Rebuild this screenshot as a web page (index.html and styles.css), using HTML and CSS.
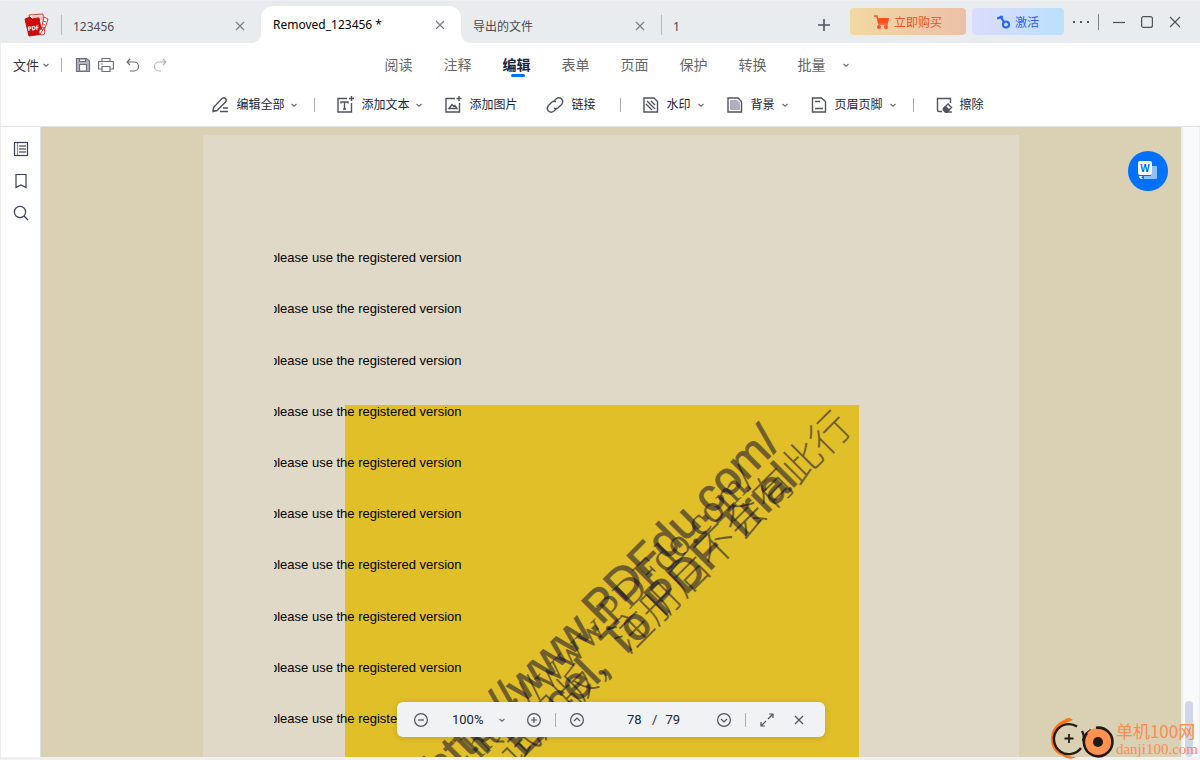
FILE: index.html
```
<!DOCTYPE html>
<html lang="zh-CN">
<head>
  <meta charset="UTF-8">
  <title>Removed_123456</title>
  <link rel="stylesheet" href="styles.css">
</head>
<body>

<header class="titlebar">
  <svg class="app-logo" width="26" height="26" viewBox="0 0 26 26">
    <path d="M5 3l14-1 1 20-12 1z" fill="#fff" stroke="#d33" />
    <path d="M8 5h10M9 7h9" stroke="#e88" />
    <path d="M20 5l4 2-5 15h-3z" fill="#fff" stroke="#d33" />
    <path d="M19 9l3 1M19 12l2 1M18 15l2 1" stroke="#d33" />
    <path d="M1 7l5-2 2 2 7-1 3 16-13 2z" fill="#cf0a0a" stroke="#cf0a0a" />
    <text class="logo-text" x="4" y="19" transform="rotate(-7 4 19)">PDF</text>
    <circle cx="18" cy="20" r="3" fill="#fff" stroke="#d33" />
    <path d="M16 22l5-7" stroke="#d33" />
  </svg>
  <div class="tabs">
    <div class="tab">
      <button class="tab-name">123456</button>
      <button class="tab-close" aria-label="关闭"><svg width="10" height="10" viewBox="0 0 10 10"><path d="M1 1l8 8M9 1L1 9" /></svg></button>
    </div>
    <div class="tab active">
      <button class="tab-name">Removed_123456 *</button>
      <button class="tab-close" aria-label="关闭"><svg width="10" height="10" viewBox="0 0 10 10"><path d="M1 1l8 8M9 1L1 9" /></svg></button>
    </div>
    <div class="tab">
      <button class="tab-name">导出的文件</button>
      <button class="tab-close" aria-label="关闭"><svg width="10" height="10" viewBox="0 0 10 10"><path d="M1 1l8 8M9 1L1 9" /></svg></button>
    </div>
    <div class="tab last">
      <button class="tab-name">1</button>
    </div>
  </div>
  <button class="icon-btn add-tab" aria-label="新建标签"><svg width="14" height="14" viewBox="0 0 14 14"><path d="M7 1v12M1 7h12" stroke-width="1.6" /></svg></button>
  <div class="window-actions">
    <button class="promo buy">
      <svg width="16" height="14" viewBox="0 0 16 14"><path d="M0 1h3l2 8h9" fill="none" stroke="#ff4d1f" stroke-width="1.6" /><path d="M4 3h11l-1 5H5z" fill="#ff4d1f" stroke="none" /><circle cx="5" cy="12" r="2" fill="#ff4d1f" stroke="none" /><circle cx="12" cy="12" r="2" fill="#ff4d1f" stroke="none" /></svg>
      立即购买
    </button>
    <button class="promo activate">
      <svg width="14" height="14" viewBox="0 0 14 14"><circle cx="9" cy="9.500" r="3" stroke="#2e62ff" stroke-width="2.2" /><path d="M7 7L3 1M0 3.500l6-2" stroke="#2e62ff" stroke-width="2.2" /></svg>
      激活
    </button>
    <button class="icon-btn more" aria-label="更多"><svg width="18" height="4" viewBox="0 0 18 4"><path d="M1 2h2M8 2h2M15 2h2" stroke-width="2" /></svg></button>
    <span class="divider"></span>
    <button class="icon-btn win" aria-label="最小化"><svg width="12" height="12" viewBox="0 0 12 12"><path d="M0 6.5h12" /></svg></button>
    <button class="icon-btn win" aria-label="最大化"><svg width="12" height="12" viewBox="0 0 12 12"><rect x=".6" y=".6" width="10.8" height="10.8" rx="2" /></svg></button>
    <button class="icon-btn win" aria-label="关闭窗口"><svg width="12" height="12" viewBox="0 0 12 12"><path d="M1 1l10 10M11 1L1 11" /></svg></button>
  </div>
</header>

<div class="menubar">
  <div class="quick">
    <button class="file-btn">文件 <svg class="chev" width="8" height="8" viewBox="0 0 8 8"><path d="M1.500 3L4 5.200 6.500 3" /></svg></button>
    <span class="divider"></span>
    <button class="icon-btn" aria-label="保存"><svg width="16" height="16" viewBox="0 0 16 16"><path d="M1.500 14.500V1.500h10L14.500 4v10.500z" fill="#b3b6c0" /><path d="M4.500 14V7.500h7V14zM4.500 2h6v2.500h-6z" fill="#fff" /></svg></button>
    <button class="icon-btn" aria-label="打印"><svg width="16" height="16" viewBox="0 0 16 16"><path d="M4 12H.600V4.500h14.800V12H12M4 4.500v-3h8v3M4 9.500h8v5H4zM3 7h2" /></svg></button>
    <button class="icon-btn undo" aria-label="撤销"><svg width="16" height="16" viewBox="0 0 16 16"><path d="M5 2L2 5l3 3M2 5h7a4.500 4.500 0 0 1 0 9H5" /></svg></button>
    <button class="icon-btn redo" aria-label="重做"><svg width="16" height="16" viewBox="0 0 16 16"><path d="M11 2l3 3-3 3M14 5H7a4.500 4.500 0 0 0 0 9h2" /></svg></button>
  </div>
  <nav class="menu">
    <a href="#">阅读</a>
    <a href="#">注释</a>
    <a href="#" class="current">编辑</a>
    <a href="#">表单</a>
    <a href="#">页面</a>
    <a href="#">保护</a>
    <a href="#">转换</a>
    <a href="#">批量</a>
    <button class="icon-btn menu-more" aria-label="更多菜单"><svg class="chev" width="8" height="8" viewBox="0 0 8 8"><path d="M1.500 3L4 5.200 6.500 3" /></svg></button>
  </nav>
</div>

<div class="toolbar">
  <button class="tool">
    <svg width="18" height="18" viewBox="0 0 18 18"><path d="M2 15.500l.500-4L11 2.500q2-1.500 3.500 0t0 3.500L6 14.500zM9 15.500h8M12 12h5" /></svg>
    编辑全部
    <svg class="chev" width="8" height="8" viewBox="0 0 8 8"><path d="M1.500 3L4 5.200 6.500 3" /></svg>
  </button>
  <span class="divider"></span>
  <button class="tool">
    <svg width="18" height="18" viewBox="0 0 18 18"><path d="M11 2.500H2v13.500h13.500V7M5 7.500V6h7v1.500M8.500 6v7M7 13h3M15.500 0v5M13 2.500h5" /></svg>
    添加文本
    <svg class="chev" width="8" height="8" viewBox="0 0 8 8"><path d="M1.500 3L4 5.200 6.500 3" /></svg>
  </button>
  <button class="tool plain">
    <svg width="18" height="18" viewBox="0 0 18 18"><path d="M11 2.500H2v13.500h13.500V7M15 0v5M12.500 2.500h5" /><path d="M5 12.500l3-4 2 2 1-1 2 3z" /></svg>
    添加图片
  </button>
  <button class="tool plain">
    <svg width="18" height="18" viewBox="0 0 18 18"><path d="M7 6l3-3q3-2.500 5.500 0t0 5.500L12 12q-2 1.500-4 0M11 12l-3 3q-3 2.500-5.500 0t0-5.500L6 6q2-1.500 4 0" /></svg>
    链接
  </button>
  <span class="divider"></span>
  <button class="tool">
    <svg width="18" height="18" viewBox="0 0 18 18"><path d="M2 2h10l3.500 3.500V16H2z" /><path d="M4 8l6 6M5 5l8 8M9 5l4 4" /></svg>
    水印
    <svg class="chev" width="8" height="8" viewBox="0 0 8 8"><path d="M1.500 3L4 5.200 6.500 3" /></svg>
  </button>
  <button class="tool">
    <svg width="18" height="18" viewBox="0 0 18 18"><path d="M2 2h10l3.500 3.500V16H2z" /><path d="M4 4h7l3 3v7H4z" fill="#adb1bb" stroke="none" /></svg>
    背景
    <svg class="chev" width="8" height="8" viewBox="0 0 8 8"><path d="M1.500 3L4 5.200 6.500 3" /></svg>
  </button>
  <button class="tool">
    <svg width="18" height="18" viewBox="0 0 18 18"><path d="M2.500 2h9L15.500 5.500V16h-13zM5 5.500h5M5 12.500h8" /></svg>
    页眉页脚
    <svg class="chev" width="8" height="8" viewBox="0 0 8 8"><path d="M1.500 3L4 5.200 6.500 3" /></svg>
  </button>
  <span class="divider"></span>
  <button class="tool plain">
    <svg width="18" height="18" viewBox="0 0 18 18"><path d="M7 15.500H4q-1.500 0-1.500-1.500V2.500H15.500V7" /><path d="M8.500 12.500l4.500-4.500 3.500 3.500-4.500 4.500h-1.500l-2-2z" /><path d="M10.500 10.500l3.500 3.500-2 2h-1.500l-2-2v-1.500z" fill="#50535e" /><path d="M12 16h5" /></svg>
    擦除
  </button>
</div>

<main class="workspace">
  <aside class="sidebar">
    <button class="icon-btn" aria-label="缩略图"><svg width="16" height="16" viewBox="0 0 16 16"><rect x="1.500" y="1.500" width="13" height="13" /><path d="M4.500 2v12" stroke="#8d909c" /><path d="M6 5h7M6 8h7M6 11h7" stroke="#8d909c" stroke-width="2" /></svg></button>
    <button class="icon-btn" aria-label="书签"><svg width="16" height="16" viewBox="0 0 16 16"><path d="M3 1.500h10v13L8 12l-5 2.500z" /></svg></button>
    <button class="icon-btn" aria-label="搜索"><svg width="16" height="16" viewBox="0 0 16 16"><circle cx="7" cy="7" r="5.600" /><path d="M11 11l4 4" /></svg></button>
  </aside>

  <section class="viewer">
    <div class="page">
      <svg class="stamp" width="514" height="352" viewBox="0 0 514 352">
        <rect width="514" height="352" fill="#e1bf29" stroke="none" />
        <g class="stamp-text">
          <text class="stamp-sans" transform="translate(437 40) rotate(-45)">http://www.PDFdu.com/</text>
          <text class="stamp-sans" transform="translate(454 77) rotate(-45)">Excel, To PDF Trial</text>
          <text class="stamp-serif" transform="translate(412 77) rotate(-45)">http://www.PDFdo.com/</text>
          <text class="stamp-serif" transform="translate(509 24) rotate(-45)">试用版，注册后不会有此行</text>
        </g>
      </svg>
      <div class="lines">
        <p>please use the registered version</p>
        <p>please use the registered version</p>
        <p>please use the registered version</p>
        <p>please use the registered version</p>
        <p>please use the registered version</p>
        <p>please use the registered version</p>
        <p>please use the registered version</p>
        <p>please use the registered version</p>
        <p>please use the registered version</p>
        <p>please use the registered version</p>
      </div>
    </div>

    <button class="to-word" aria-label="转换为 Word">
      <svg width="22" height="22" viewBox="0 0 22 22">
        <path d="M9 6h10q1 0 1 1v11q0 1-1 1H7v-3h7V6z" fill="#8dc0ff" />
        <rect x="1" y="1" width="14" height="14" rx="2" fill="#fff" />
        <text class="word-letter" x="8" y="12">W</text>
        <path d="M2 16h4l-2 1 2 2H4q-2-1-2-3z" fill="#fff" />
      </svg>
    </button>

    <div class="page-bar">
      <button class="icon-btn" aria-label="缩小"><svg width="16" height="16" viewBox="0 0 16 16"><circle cx="8" cy="8" r="6.400" /><path d="M5 8h6" /></svg></button>
      <span class="zoom-box">
        <select class="zoom" aria-label="缩放"><option>100%</option></select>
        <svg class="chev" width="8" height="8" viewBox="0 0 8 8"><path d="M1.500 3L4 5.200 6.500 3" /></svg>
      </span>
      <button class="icon-btn" aria-label="放大"><svg width="16" height="16" viewBox="0 0 16 16"><circle cx="8" cy="8" r="6.400" /><path d="M5 8h6M8 5v6" /></svg></button>
      <span class="divider"></span>
      <button class="icon-btn" aria-label="上一页"><svg width="16" height="16" viewBox="0 0 16 16"><circle cx="8" cy="8" r="6.400" /><path d="M5 9l3-3 3 3" /></svg></button>
      <span class="page-count">
        <input class="page-no" type="text" value="78" aria-label="页码">
        <span>/</span>
        <span>79</span>
      </span>
      <button class="icon-btn" aria-label="下一页"><svg width="16" height="16" viewBox="0 0 16 16"><circle cx="8" cy="8" r="6.400" /><path d="M5 7l3 3 3-3" /></svg></button>
      <span class="divider"></span>
      <button class="icon-btn" aria-label="全屏"><svg width="16" height="16" viewBox="0 0 16 16"><path d="M9 7l5-5M10 2h4v4M7 9l-5 5M2 10v4h4" /></svg></button>
      <button class="icon-btn" aria-label="关闭工具条"><svg width="16" height="16" viewBox="0 0 16 16"><path d="M4 4l8 8M12 4l-8 8" /></svg></button>
    </div>
  </section>

  <div class="scrollbar"><div class="thumb"></div></div>

  <div class="site-mark">
    <svg width="66" height="44" viewBox="0 0 66 44">
      <path d="M23 3q-4-4-9 0Q1 9 1 22t12 17q7 5 13 1-9 0-15-6Q5 29 5 21 6 8 23 3z" fill="#ff7410" />
      <path d="M27 9.500A15 15 0 1 0 31 31M32 14q3 5 1 10M35 20q1-4 6-7" fill="none" stroke="#231a16" stroke-width="2.400" />
      <path d="M14.500 21.500h9M19 17v9" stroke="#231a16" stroke-width="1.800" />
      <circle cx="48" cy="25" r="14" fill="#ff924e" />
      <path d="M46 10.800A14.300 14.300 0 1 1 37 16" fill="none" stroke="#231a16" stroke-width="2.600" />
      <circle cx="48" cy="25" r="5" fill="#231a16" />
    </svg>
    <div class="site-name">
      <span class="site-cn">单机100网</span>
      <span class="site-url">danji100.com</span>
    </div>
  </div>
</main>

</body>
</html>
```
FILE: styles.css
```
* {
  box-sizing: border-box;
}
body {
  margin: 0;
  height: 100vh;
  display: flex;
  flex-direction: column;
  overflow: hidden;
  border-left: 1px solid #ececec;
  background: #fff;
  color: #20243a;
  font-family: "Noto Sans", "Noto Sans CJK SC", sans-serif;
  font-size: 12px;
}
button {
  border: 0;
  padding: 0;
  background: none;
  color: inherit;
  font: inherit;
  cursor: pointer;
}
svg {
  display: block;
  flex: none;
  fill: none;
  stroke: #50535e;
  stroke-width: 1.2;
}
svg text {
  stroke: none;
}
.icon-btn {
  width: 22px;
  height: 22px;
  display: flex;
  align-items: center;
  justify-content: center;
}
.divider {
  width: 1px;
  height: 14px;
  background: #a9acb2;
}
.chev path {
  stroke: #6c707c;
}

/* title bar */
.titlebar {
  height: 43px;
  flex: none;
  display: flex;
  align-items: stretch;
  background: #e9ecef;
  border-top: 1px solid #f0f0f0;
}
.app-logo {
  margin: 11px 11px 0 23px;
  stroke-width: 1;
}
.logo-text {
  fill: #fff;
  font-size: 6px;
  font-weight: bold;
}
.tabs {
  flex: 1;
  display: flex;
  padding-top: 5px;
}
.tab {
  position: relative;
  width: 200px;
  display: flex;
  align-items: center;
  justify-content: space-between;
  padding: 3px 16px 0 12px;
  color: #4a4a4a;
  font-size: 12px;
}
.tab:first-child::before,
.tab.last::before {
  content: "";
  position: absolute;
  left: 0;
  top: 9px;
  width: 1px;
  height: 20px;
  background: #b4b8bd;
}
.tab.last {
  width: auto;
}
.tab.active {
  padding-top: 0;
  background: #fff;
  color: #000;
  border-radius: 12px 12px 0 0;
}
.tab.active::before,
.tab.active::after {
  content: "";
  position: absolute;
  bottom: 0;
  width: 10px;
  height: 10px;
}
.tab.active::before {
  left: -10px;
  background: radial-gradient(circle at 0 0, #e9ecef 10px, #fff 10px);
}
.tab.active::after {
  right: -10px;
  background: radial-gradient(circle at 100% 0, #e9ecef 10px, #fff 10px);
}
.tab-close svg {
  stroke: #7b7f86;
}
.add-tab {
  margin: 13px 15px 0 0;
}
.window-actions {
  display: flex;
  align-items: center;
  height: 41px;
}
.window-actions .divider {
  height: 16px;
  margin-right: 6px;
  background: #7b7f86;
}
.promo {
  height: 27px;
  display: flex;
  align-items: center;
  justify-content: center;
  gap: 4px;
  margin-right: 6px;
  border-radius: 4px;
}
.buy {
  width: 116px;
  color: #f0502a;
  background: linear-gradient(90deg, #f1d9a1, #ecc0a8);
}
.activate {
  width: 92px;
  color: #2e62ff;
  background: linear-gradient(90deg, #dcdcfb, #bbe0fd);
}
.more {
  margin-right: 6px;
}
.win {
  width: 28px;
  margin-right: 0;
}
.win:last-child {
  margin-right: 11px;
}

/* menu row */
.menubar {
  height: 43px;
  flex: none;
  display: grid;
  grid-template-columns: 1fr auto 1fr;
  align-items: center;
}
.quick {
  display: flex;
  align-items: center;
  padding-left: 12px;
}
.quick .icon-btn svg {
  stroke: #6c707c;
}
.quick .divider {
  margin: 0 10px 0 11px;
}
.quick .icon-btn {
  margin-right: 1px;
}
.quick .undo,
.quick .redo {
  margin-left: 4px;
}
.quick .redo svg {
  stroke: #b0b3ba;
}
.file-btn {
  display: flex;
  align-items: center;
  gap: 3px;
  font-size: 13px;
  color: #333;
}
.menu {
  display: flex;
  align-items: center;
  gap: 31px;
  padding-left: 40px;
}
.menu a {
  position: relative;
  color: #666;
  font-size: 14px;
  line-height: 20px;
  text-decoration: none;
}
.menu .current {
  color: #20243a;
  font-weight: bold;
}
.menu .current::after {
  content: "";
  position: absolute;
  left: 8px;
  bottom: -2px;
  width: 14px;
  height: 3px;
  border-radius: 2px;
  background: #0070ff;
}
.menu-more {
  margin-left: -22px;
}

/* tools row */
.toolbar {
  height: 41px;
  flex: none;
  display: flex;
  align-items: center;
  justify-content: center;
  gap: 21px;
  padding: 0 0 3px 2px;
  border-bottom: 1px solid #e3e5e5;
}
.tool {
  display: flex;
  align-items: center;
  gap: 7px;
  line-height: 18px;
}
.tool svg {
  stroke-width: 1.4;
}
.tool .chev {
  margin-left: -1px;
  stroke-width: 1.2;
}
.tool.plain {
  padding-right: 8px;
}
.toolbar .divider {
  margin-left: -5px;
}

/* document area */
.workspace {
  position: relative;
  flex: 1;
  min-height: 0;
  display: flex;
  border-bottom: 3px solid #f0f0f0;
}
.sidebar {
  width: 40px;
  display: flex;
  flex-direction: column;
  align-items: center;
  gap: 10px;
  padding-top: 11px;
  border-right: 1px solid #dcdfe2;
}
.sidebar svg {
  stroke: #3b3f52;
}
.viewer {
  position: relative;
  flex: 1;
  overflow: hidden;
  padding-top: 8px;
  background: #dad0b4;
}
.page {
  position: relative;
  width: 816px;
  height: 1056px;
  margin: 0 auto;
  padding: 97px 71px 0;
  background: #e0d9c7;
}
.stamp {
  position: absolute;
  left: 142px;
  top: 270px;
}
.stamp-text {
  text-anchor: end;
  fill: #000032;
}
.stamp-text text {
  opacity: 0.5;
}
.stamp-text .stamp-sans {
  font-family: "Liberation Sans", sans-serif;
  font-size: 46px;
  stroke: #000032;
  stroke-width: 1;
}
.stamp-serif {
  font-family: "Liberation Serif", "Noto Sans CJK SC", serif;
  font-size: 40px;
  font-weight: 300;
}
.lines {
  position: relative;
  height: 512px;
  display: flex;
  flex-direction: column;
}
.lines p {
  flex: 1;
  display: flex;
  align-items: center;
  margin: 0;
  overflow: hidden;
  text-indent: -4px;
  color: #000;
  font-family: "Liberation Sans", Arial, sans-serif;
  font-size: 13px;
}
.to-word {
  position: absolute;
  right: 13px;
  top: 24px;
  width: 40px;
  height: 40px;
  display: flex;
  align-items: center;
  justify-content: center;
  border-radius: 50%;
  background: #0070ff;
}
.to-word svg {
  stroke: none;
}
.word-letter {
  fill: #0070ff;
  font-family: "Liberation Sans", sans-serif;
  font-size: 10px;
  font-weight: bold;
  text-anchor: middle;
}
.page-bar {
  position: absolute;
  left: 50%;
  bottom: 20px;
  transform: translateX(-50%);
  height: 35px;
  display: flex;
  align-items: center;
  gap: 10px;
  padding: 0 13px;
  border-radius: 6px;
  background: #f0f2f4;
  box-shadow: 0 1px 6px rgba(0, 0, 0, 0.15);
  font-family: Roboto, sans-serif;
  font-size: 13px;
}
.page-bar .icon-btn:last-child {
  margin-right: 2px;
}
.zoom-box {
  width: 71px;
  display: flex;
  align-items: center;
  justify-content: space-between;
  padding: 0 7px 0 10px;
}
.zoom,
.page-no {
  appearance: none;
  border: 0;
  padding: 0;
  background: none;
  color: inherit;
  font: inherit;
}
.page-no {
  width: 17px;
}
.page-count {
  width: 105px;
  display: flex;
  justify-content: center;
  gap: 8px;
  padding-left: 6px;
}
.scrollbar {
  width: 19px;
  display: flex;
  align-items: flex-end;
  padding-left: 2px;
  border-left: 2px solid #eee;
  border-right: 1px solid #eee;
  background: #f8f9fb;
}
.thumb {
  width: 8px;
  height: 56px;
  border-radius: 4px;
  background: #d0d6e6;
}
.site-mark {
  position: absolute;
  right: 2px;
  bottom: -4px;
  display: flex;
  align-items: center;
}
.site-mark svg {
  stroke: none;
}
.site-name {
  display: flex;
  flex-direction: column;
  color: #ff8b4d;
}
.site-cn {
  font-family: "Noto Sans CJK SC", sans-serif;
  font-size: 17px;
  line-height: 20px;
}
.site-url {
  font-family: "Liberation Serif", serif;
  font-size: 15px;
  line-height: 17px;
}
```
